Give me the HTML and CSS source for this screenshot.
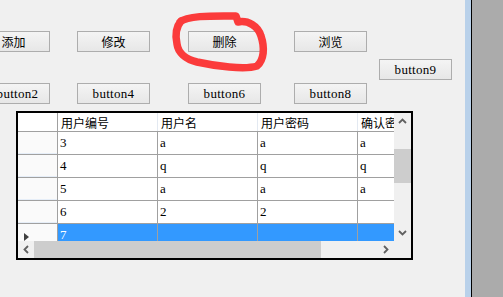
FILE: index.html
```html
<!DOCTYPE html>
<html>
<head>
<meta charset="utf-8">
<link rel="stylesheet" href="styles.css">
</head>
<body>
<div class="screen">
  <div class="form">
    <div class="row">
      <div class="btn cjk c1">添加</div>
      <div class="btn cjk c2">修改</div>
      <div class="btn cjk c3">删除</div>
      <div class="btn cjk c4">浏览</div>
    </div>
    <div class="row row9">
      <div class="btn">button9</div>
    </div>
    <div class="row r2">
      <div class="btn c1 shift">button2</div>
      <div class="btn c2">button4</div>
      <div class="btn c3">button6</div>
      <div class="btn c4">button8</div>
    </div>
    <div class="dgv">
      <div class="dgv-body">
        <div class="dgv-cells">
          <div class="dr head">
            <div class="rh"></div>
            <div class="c">用户编号</div>
            <div class="c">用户名</div>
            <div class="c">用户密码</div>
            <div class="c">确认密码</div>
          </div>
          <div class="dr">
            <div class="rh"></div>
            <div class="c">3</div><div class="c">a</div><div class="c">a</div><div class="c">a</div>
          </div>
          <div class="dr">
            <div class="rh"></div>
            <div class="c">4</div><div class="c">q</div><div class="c">q</div><div class="c">q</div>
          </div>
          <div class="dr">
            <div class="rh"></div>
            <div class="c">5</div><div class="c">a</div><div class="c">a</div><div class="c">a</div>
          </div>
          <div class="dr">
            <div class="rh"></div>
            <div class="c">6</div><div class="c">2</div><div class="c">2</div><div class="c"></div>
          </div>
          <div class="dr sel">
            <div class="rh"><span class="cur"></span></div>
            <div class="c">7</div><div class="c"></div><div class="c"></div><div class="c"></div>
          </div>
        </div>
        <div class="vscroll">
          <div class="arrow"><svg width="17" height="17" viewBox="0 0 17 17"><polyline points="5,10 8.5,6.5 12,10" fill="none" stroke="#606060" stroke-width="1.8"/></svg></div>
          <div class="vtrack"><div class="vthumb"></div></div>
          <div class="arrow"><svg width="17" height="17" viewBox="0 0 17 17"><polyline points="5,7 8.5,10.5 12,7" fill="none" stroke="#606060" stroke-width="1.8"/></svg></div>
        </div>
      </div>
      <div class="dgv-foot">
        <div class="hscroll">
          <div class="arrow"><svg width="17" height="17" viewBox="0 0 17 17"><polyline points="10,5 6.5,8.5 10,12" fill="none" stroke="#606060" stroke-width="1.8"/></svg></div>
          <div class="hthumb"></div>
          <div class="hspace"></div>
          <div class="arrow"><svg width="17" height="17" viewBox="0 0 17 17"><polyline points="7,5 10.5,8.5 7,12" fill="none" stroke="#606060" stroke-width="1.8"/></svg></div>
        </div>
        <div class="corner"></div>
      </div>
    </div>
    <svg class="mark" width="465" height="297" viewBox="0 0 465 297">
      <path d="M180 22 C188 15 215 16 236 16 L238 22 C248 20 258 26 261 36 C265 48 264 60 257 66 C245 70 215 66 197 62 C185 59 178 52 177 44 C175 35 176 27 181 21" fill="none" stroke="#fb3b3b" stroke-width="7.5" stroke-linecap="round" stroke-linejoin="round"/>
    </svg>
  </div>
  <div class="edge"></div>
  <div class="edge-line"></div>
  <div class="desk"></div>
</div>
</body>
</html>
```

FILE: styles.css
```css
html, body {
  margin: 0;
  padding: 0;
}
body {
  width: 503px;
  height: 297px;
  overflow: hidden;
  background: #ababab;
  font-family: "Liberation Serif", serif;
}
.screen {
  display: flex;
  height: 297px;
}
.form {
  position: relative;
  width: 465px;
  flex: none;
  background: #f0f0f0;
  overflow: hidden;
  padding-top: 31px;
  box-sizing: border-box;
}
.edge {
  width: 6px;
  flex: none;
  background: #b9d1ea;
}
.edge-line {
  width: 1px;
  flex: none;
  background: #000;
}
.desk {
  flex: 1;
  background: #ababab;
}

.row {
  display: flex;
  height: 21px;
}
.row9 {
  margin-top: 7px;
  padding-left: 379px;
}
.r2 {
  margin-top: 3px;
}
.btn {
  box-sizing: border-box;
  width: 73px;
  height: 21px;
  flex: none;
  border: 1px solid #adadad;
  background: linear-gradient(#f4f4f4, #e7e7e7);
  display: flex;
  align-items: center;
  justify-content: center;
  font-family: "Liberation Serif", serif;
  font-size: 13px;
  letter-spacing: 0.3px;
  color: #000;
}
.btn.cjk {
  font-family: "Noto Sans CJK SC", sans-serif;
  font-size: 12px;
  letter-spacing: 0;
}
.btn.shift {
  padding-left: 8px;
}
.c1 { margin-left: -23px; }
.c2 { margin-left: 27px; }
.c3 { margin-left: 38px; }
.c4 { margin-left: 33px; }

.dgv {
  margin-top: 7px;
  margin-left: 16px;
  width: 397px;
  height: 149px;
  box-sizing: border-box;
  border: 2px solid #000;
  background: #fff;
  display: flex;
  flex-direction: column;
}
.dgv-body {
  display: flex;
  height: 128px;
}
.dgv-cells {
  width: 376px;
  overflow: hidden;
  background: #fff;
}
.dr {
  display: flex;
  height: 23px;
  box-sizing: border-box;
  border-bottom: 1px solid #a0a0a0;
}
.dr.head {
  height: 19px;
}
.rh {
  position: relative;
  width: 40px;
  flex: none;
  box-sizing: border-box;
  border-right: 1px solid #a0a0a0;
  background: #fafafa;
  box-shadow: inset 0 -1px 0 #e6eef8;
}
.head .rh {
  background: #fff;
  box-shadow: none;
}
.c {
  width: 100px;
  flex: none;
  box-sizing: border-box;
  border-right: 1px solid #a0a0a0;
  padding-left: 2px;
  display: flex;
  align-items: center;
  font-family: "Liberation Serif", serif;
  font-size: 13px;
  color: #000;
  white-space: nowrap;
  overflow: hidden;
}
.head .c {
  font-family: "Noto Sans CJK SC", sans-serif;
  font-size: 12px;
  border-right: 1px solid #e3e9f1;
  padding-left: 3px;
  background: #fff;
}
.sel .c {
  background: #3399ff;
  color: #fff;
}
.cur {
  position: absolute;
  left: 6px;
  top: 9px;
  width: 0;
  height: 0;
  border-top: 4.5px solid transparent;
  border-bottom: 4.5px solid transparent;
  border-left: 5px solid #404040;
}

.vscroll {
  width: 17px;
  flex: none;
  background: #f0f0f0;
  display: flex;
  flex-direction: column;
}
.arrow {
  width: 17px;
  height: 17px;
  flex: none;
}
.arrow svg {
  display: block;
}
.vtrack {
  flex: 1;
}
.vthumb {
  margin-top: 19px;
  height: 34px;
  background: #cdcdcd;
}
.dgv-foot {
  display: flex;
  height: 17px;
}
.hscroll {
  width: 376px;
  display: flex;
  background: #f0f0f0;
}
.hthumb {
  width: 287px;
  margin-left: -1px;
  background: #cdcdcd;
}
.hspace {
  flex: 1;
}
.corner {
  flex: 1;
  background: #f0f0f0;
}
.mark {
  position: absolute;
  left: 0;
  top: 0;
  pointer-events: none;
}
```
